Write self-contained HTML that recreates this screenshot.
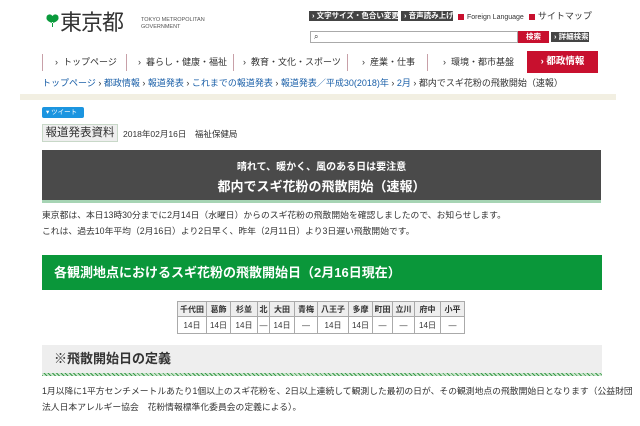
<!DOCTYPE html>
<html><head><meta charset="utf-8"><style>
*{margin:0;padding:0;box-sizing:border-box}
body{width:640px;height:426px;overflow:hidden;background:#fff;font-family:"Liberation Sans","Noto Sans CJK JP",sans-serif;color:#333;position:relative}
.a{position:absolute;white-space:nowrap}
.gb{background:#444;color:#fff;font-size:7.5px;line-height:10px;height:10px;padding:0 3px;font-weight:bold}
.rs{display:inline-block;width:6px;height:6px;background:#c8102e;vertical-align:middle;margin-right:3px}
.nav{top:55px;height:15px;font-size:9px;line-height:15px;color:#333}
.sep{position:absolute;top:54px;width:1px;height:17px;background:#c8a0a8}
table{border-collapse:collapse;font-size:8px;table-layout:fixed;border:1px solid #888}
td{border:1px solid #aaa;text-align:center;height:15px;padding:0;font-weight:bold;overflow:hidden}
tr.b td{font-weight:normal;background:#fff;height:17px}
tr.h td{background:#eee}
p.t{font-size:8.8px;line-height:16px;color:#333}
</style></head><body>
<svg class="a" style="left:46px;top:14px" width="13" height="14" viewBox="0 0 13 14"><path d="M6.5 9 Q2 8 0.5 5 Q0 1 3 0.5 Q5 0 6.5 2 Q8 0 10 0.5 Q13 1 12.5 5 Q11 8 6.5 9 Z M6 8 L6 13 L7 13 L7 8 Z" fill="#0a9a3c"/></svg>
<div class="a" style="left:60px;top:11px;font-size:22px;line-height:24px;color:#333;letter-spacing:-1px">東京都</div>
<div class="a" style="left:141px;top:17px;font-size:5.5px;line-height:7px;color:#555">TOKYO METROPOLITAN<br>GOVERNMENT</div>
<div class="a gb" style="left:309px;top:11px;width:89px">› 文字サイズ・色合い変更</div>
<div class="a gb" style="left:401px;top:11px;width:52px">› 音声読み上げ</div>
<div class="a" style="left:458px;top:10px;font-size:7px;line-height:12px"><span class="rs"></span>Foreign Language<span class="rs" style="margin-left:5px"></span><span style="font-size:9px">サイトマップ</span></div>
<div class="a" style="left:310px;top:31px;width:208px;height:12px;border:1px solid #aaa;font-size:8px;line-height:10px;padding-left:3px">⌕</div>
<div class="a" style="left:518px;top:31px;width:31px;height:12px;background:#c8102e;color:#fff;font-size:7.5px;line-height:12px;text-align:center;font-weight:bold">検索</div>
<div class="a gb" style="left:551px;top:32px;width:38px">› 詳細検索</div>
<div class="sep" style="left:42px"></div><div class="sep" style="left:126px"></div><div class="sep" style="left:233px"></div><div class="sep" style="left:347px"></div><div class="sep" style="left:427px"></div>
<div class="a nav" style="left:55px">›&nbsp; トップページ</div>
<div class="a nav" style="left:138px">›&nbsp; 暮らし・健康・福祉</div>
<div class="a nav" style="left:243px">›&nbsp; 教育・文化・スポーツ</div>
<div class="a nav" style="left:362px">›&nbsp; 産業・仕事</div>
<div class="a nav" style="left:443px">›&nbsp; 環境・都市基盤</div>
<div class="a" style="left:527px;top:51px;width:71px;height:22px;background:#c8102e;color:#fff;font-size:9.5px;line-height:22px;text-align:center;font-weight:bold">› 都政情報</div>
<div class="a" style="left:42px;top:77px;font-size:9px;line-height:12px;color:#1a5fa8">トップページ <span style="color:#333">›</span> 都政情報 <span style="color:#333">›</span> 報道発表 <span style="color:#333">›</span> これまでの報道発表 <span style="color:#333">›</span> 報道発表／平成30(2018)年 <span style="color:#333">›</span> 2月 <span style="color:#333">› 都内でスギ花粉の飛散開始（速報）</span></div>
<div class="a" style="left:20px;top:94px;width:596px;height:6px;background:#f2efe2"></div>
<div class="a" style="left:42px;top:107px;width:42px;height:11px;background:#1b95e0;border-radius:2px;color:#fff;font-size:6.5px;line-height:11px;padding-left:4px">▾ ツイート</div>
<div class="a" style="left:42px;top:124px;width:76px;height:18px;background:#eee;border:1px solid #c8d8c8;font-size:11.5px;line-height:16px;text-align:center">報道発表資料</div>
<div class="a" style="left:123px;top:128px;font-size:8.5px">2018年02月16日　福祉保健局</div>
<div class="a" style="left:42px;top:150px;width:559px;height:50px;background:#4a4a4a;color:#fff;text-align:center;font-weight:bold">
<div style="font-size:10px;margin-top:8px">晴れて、暖かく、風のある日は要注意</div>
<div style="font-size:13px;margin-top:3px">都内でスギ花粉の飛散開始（速報）</div></div>
<div class="a" style="left:42px;top:200px;width:559px;height:3px;background:#a6d4b4"></div>
<div class="a" style="left:42px;top:207px"><p class="t">東京都は、本日13時30分までに2月14日（水曜日）からのスギ花粉の飛散開始を確認しましたので、お知らせします。<br>これは、過去10年平均（2月16日）より2日早く、昨年（2月11日）より3日遅い飛散開始です。</p></div>
<div class="a" style="left:42px;top:255px;width:560px;height:35px;background:#0a973a;color:#fff;font-size:13px;font-weight:bold;line-height:35px;padding-left:12px">各観測地点におけるスギ花粉の飛散開始日（2月16日現在）</div>
<table class="a" style="left:177px;top:301px;width:287px">
<colgroup><col style="width:29px"><col style="width:24px"><col style="width:27px"><col style="width:12px"><col style="width:25px"><col style="width:23px"><col style="width:31px"><col style="width:24px"><col style="width:20px"><col style="width:22px"><col style="width:26px"><col style="width:24px"></colgroup>
<tr class="h"><td>千代田</td><td>葛飾</td><td>杉並</td><td>北</td><td>大田</td><td>青梅</td><td>八王子</td><td>多摩</td><td>町田</td><td>立川</td><td>府中</td><td>小平</td></tr>
<tr class="b"><td>14日</td><td>14日</td><td>14日</td><td>—</td><td>14日</td><td>—</td><td>14日</td><td>14日</td><td>—</td><td>—</td><td>14日</td><td>—</td></tr>
</table>
<div class="a" style="left:42px;top:345px;width:560px;height:28px;background:#eee;font-size:13px;font-weight:bold;line-height:28px;padding-left:12px">※飛散開始日の定義</div>
<div class="a" style="left:42px;top:373px;width:560px;height:3px;background:repeating-linear-gradient(45deg,#3a9a4a 0 1px,#cde6cf 1px 3px)"></div>
<div class="a" style="left:42px;top:383px"><p class="t">1月以降に1平方センチメートルあたり1個以上のスギ花粉を、2日以上連続して観測した最初の日が、その観測地点の飛散開始日となります（公益財団<br>法人日本アレルギー協会　花粉情報標準化委員会の定義による）。</p></div>
</body></html>
